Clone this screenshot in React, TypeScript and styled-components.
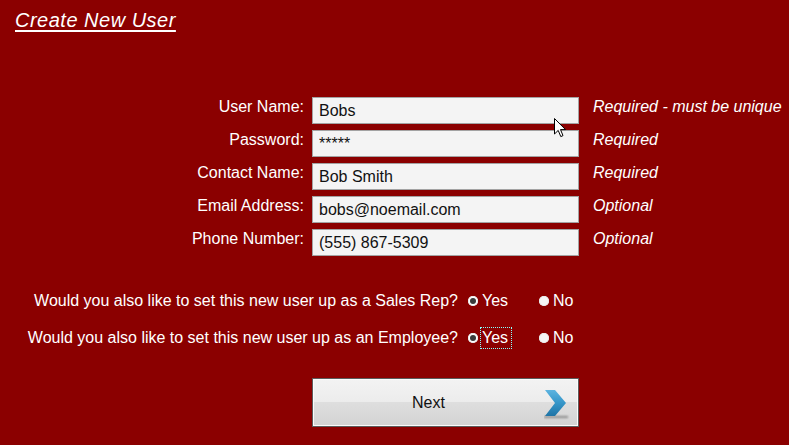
import styled, { createGlobalStyle } from 'styled-components';

const GlobalStyle = createGlobalStyle`
  html, body {
    margin: 0;
    padding: 0;
    background: #8b0000;
  }
  body {
    font-family: "Liberation Sans", Arial, sans-serif;
    color: #fff;
  }
`;

const fields = [
  { label: 'User Name:', value: 'Bobs', hint: 'Required - must be unique' },
  { label: 'Password:', value: '*****', hint: 'Required' },
  { label: 'Contact Name:', value: 'Bob Smith', hint: 'Required' },
  { label: 'Email Address:', value: 'bobs@noemail.com', hint: 'Optional' },
  { label: 'Phone Number:', value: '(555) 867-5309', hint: 'Optional' },
];

const questions = [
  { text: 'Would you also like to set this new user up as a Sales Rep?', focused: false },
  { text: 'Would you also like to set this new user up as an Employee?', focused: true },
];

export default function App() {
  return (
    <>
      <GlobalStyle />
      <Screen>
        <Title>Create New User</Title>

        <Form>
          {fields.map((f) => (
            <Row key={f.label}>
              <Label>{f.label}</Label>
              <Input defaultValue={f.value} spellCheck={false} />
              <Hint>{f.hint}</Hint>
            </Row>
          ))}
        </Form>

        <Questions>
          {questions.map((q) => (
            <QuestionRow key={q.text}>
              <QuestionText>{q.text}</QuestionText>
              <Option>
                <Radio $checked />
                <OptionText $focused={q.focused}>Yes</OptionText>
              </Option>
              <Option>
                <Radio />
                <OptionText>No</OptionText>
              </Option>
            </QuestionRow>
          ))}
        </Questions>

        <ButtonRow>
          <NextButton type="button">
            <ButtonText>Next</ButtonText>
            <Chevron width="26" height="30" viewBox="0 0 26 30">
              <defs>
                <linearGradient id="chev" x1="0" y1="0" x2="0" y2="1">
                  <stop offset="0" stopColor="#5db4e0" />
                  <stop offset="0.5" stopColor="#3595c8" />
                  <stop offset="1" stopColor="#1f74a6" />
                </linearGradient>
                <filter id="blur" x="-20%" y="-200%" width="140%" height="500%">
                  <feGaussianBlur stdDeviation="0.8" />
                </filter>
              </defs>
              <rect x="0" y="26" width="24" height="2" fill="#8a8a8a" filter="url(#blur)" />
              <polygon points="1,0 11,0 22,13 11,26 1,26 11,13" fill="url(#chev)" />
            </Chevron>
          </NextButton>
        </ButtonRow>

        <Cursor width="13" height="20" viewBox="0 0 13 20">
          <path
            d="M0.5 0.5 L0.5 16 L4.2 12.4 L6.8 18.6 L9 17.6 L6.5 11.6 L11.5 11.6 Z"
            fill="#fff"
            stroke="#000"
            strokeWidth="1"
            strokeLinejoin="miter"
          />
        </Cursor>
      </Screen>
    </>
  );
}

const Screen = styled.div`
  position: relative;
  width: 789px;
  height: 445px;
  overflow: hidden;
  background: #8b0000;
  padding-top: 9px;
  box-sizing: border-box;
`;

const Title = styled.h1`
  margin: 0 0 0 15px;
  font-size: 20px;
  line-height: 22px;
  font-weight: normal;
  font-style: italic;
  letter-spacing: 0.5px;
  text-decoration: underline;
  text-underline-offset: 3px;
  color: #fff;
`;

const Form = styled.div`
  margin-top: 66px;
  display: grid;
  grid-template-columns: 312px 267px 1fr;
  row-gap: 6px;
`;

const Row = styled.div`
  display: contents;
`;

const Label = styled.div`
  padding-right: 8px;
  text-align: right;
  font-size: 16px;
  line-height: 20px;
  white-space: nowrap;
`;

const Input = styled.input`
  box-sizing: border-box;
  width: 267px;
  height: 27px;
  margin: 0;
  padding: 0 6px;
  border: 1px solid #a3a3a3;
  background: #f4f4f4;
  color: #111;
  font-family: "Liberation Sans", Arial, sans-serif;
  font-size: 16px;
  outline: none;
`;

const Hint = styled.div`
  padding-left: 14px;
  font-size: 16px;
  line-height: 20px;
  font-style: italic;
  white-space: nowrap;
`;

const Questions = styled.div`
  margin-top: 34px;
  display: flex;
  flex-direction: column;
  gap: 15px;
`;

const QuestionRow = styled.div`
  display: grid;
  grid-template-columns: 468px 71px auto;
  align-items: center;
  height: 22px;
`;

const QuestionText = styled.div`
  padding-right: 10px;
  text-align: right;
  font-size: 16px;
  line-height: 22px;
  white-space: nowrap;
`;

const Option = styled.div`
  display: flex;
  align-items: center;
  gap: 3px;
`;

const Radio = styled.span<{ $checked?: boolean }>`
  position: relative;
  width: 10px;
  height: 10px;
  border-radius: 50%;
  background: ${(p) => (p.$checked ? '#fff' : '#f6f6f6')};
  box-shadow: inset 0 0 0 1px #e8e8e8;

  &::after {
    content: '';
    display: ${(p) => (p.$checked ? 'block' : 'none')};
    position: absolute;
    left: 2px;
    top: 2px;
    width: 6px;
    height: 6px;
    border-radius: 50%;
    background: #3a3a3a;
  }
`;

const OptionText = styled.span<{ $focused?: boolean }>`
  padding: 0 3px 0 1px;
  font-size: 16px;
  line-height: 20px;
  outline: ${(p) => (p.$focused ? '1px dotted #8ff' : 'none')};
  outline-offset: 0;
`;

const ButtonRow = styled.div`
  margin-top: 29px;
  padding-left: 312px;
`;

const NextButton = styled.button`
  box-sizing: border-box;
  width: 267px;
  height: 49px;
  margin: 0;
  padding: 0 8px 0 0;
  display: flex;
  align-items: center;
  border: 1px solid #5c5c5c;
  box-shadow: inset 0 0 0 1px #fbfbfb;
  background: linear-gradient(
    to bottom,
    #f3f3f3 0%,
    #ececec 50%,
    #dedede 50%,
    #d3d3d3 100%
  );
  font-family: "Liberation Sans", Arial, sans-serif;
  cursor: pointer;
`;

const ButtonText = styled.span`
  flex: 1;
  text-align: center;
  font-size: 16px;
  color: #111;
`;

const Chevron = styled.svg`
  display: block;
  margin-top: 4px;
`;

const Cursor = styled.svg`
  position: absolute;
  left: 554px;
  top: 118px;
`;
